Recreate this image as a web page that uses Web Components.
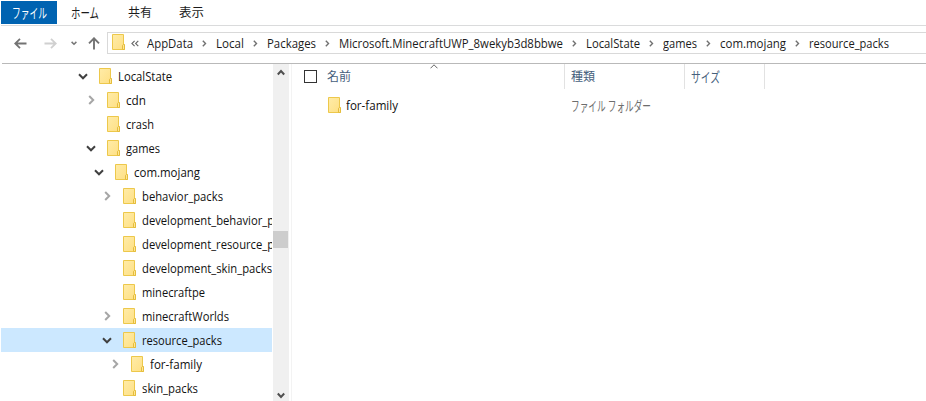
<!DOCTYPE html>
<html lang="ja"><head><meta charset="utf-8"><title>resource_packs</title>
<style>html,body{margin:0;background:#fff;overflow:hidden}body{font:12px "Open Sans","Noto Sans CJK JP",sans-serif;color:#1b1b1b}</style></head>
<body><file-explorer></file-explorer>
<script>
const define=(name,html,setup)=>customElements.define(name,class extends HTMLElement{
  connectedCallback(){
    if(this.shadowRoot)return;
    const t=document.createElement('template');
    t.innerHTML=typeof html==='function'?html(this):html;
    this.attachShadow({mode:'open'}).append(t.content.cloneNode(true));
    if(setup)setup(this);
  }
});

// A label whose glyphs are condensed or widened to the given advance width.
define('ui-label',e=>`<style>:host{display:block;flex:none;width:${e.getAttribute('w')}px;height:16px;line-height:16px;white-space:nowrap}span{display:inline-block;transform-origin:0 50%;line-height:16px;height:16px;vertical-align:top}</style><span>${e.getAttribute('text')}</span>`,e=>{
  const s=e.shadowRoot.querySelector('span');
  const kana=/[ァ-ヶ]/.test(e.getAttribute('text'));
  s.style.transform=`scale(${e.getAttribute('w')/s.getBoundingClientRect().width},${kana?1.14:1})`;
});

define('folder-icon',`<style>:host{display:block;flex:none;width:13px;height:16px}svg{display:block}</style>
<svg width="13" height="16" viewBox="0 0 13 16"><defs><linearGradient id="g" x2="1" y2="1"><stop stop-color="#ffeca8"/><stop offset="1" stop-color="#fedf83"/></linearGradient></defs><path d="M.5.5h11v10.5h1v4.5H.5z" fill="url(#g)" stroke="#edc84b"/><path d="M10.5 15.5v-4.2l1-.8h1v5z" fill="#ffe695" stroke="#e5bd3c"/></svg>`);

const shapes={
  right:[7,10,'M1.2 1l4 4-4 4','#a6a6a6',2],
  down:[10,7,'M1 1.3l4 4 4-4','#404040',2],
  crumb:[5,7,'M.8.8l2.7 2.7L.8 6.2','#707070',1.4],
  double:[8,7,'M3.6.8L.9 3.5l2.7 2.7M7.3.8L4.6 3.5l2.7 2.7','#666',1.1],
  recent:[6,5,'M.6.9L3 3.3 5.4.9','#777',1.5],
  back:[13,11,'M12.5 5.5H1.2M6 .8L1.2 5.5 6 10.2','#737373',1.8],
  forward:[13,11,'M.5 5.5h11.3M7 .8l4.8 4.7L7 10.2','#d0d0d0',1.8],
  up:[12,13,'M6 12.5V1.5M1 6.3l5-5 5 5','#737373',1.9],
  sort:[8,5,'M.5 4.3L4 .8l3.5 3.5','#666',1],
  sup:[8,7,'M.8 5.5L4 2l3.2 3.5','#505050',2],
  sdown:[8,7,'M.8 1.5L4 5l3.2-3.5','#505050',2]
};
define('line-icon',e=>{const[w,h,d,c,s]=shapes[e.getAttribute('name')];return `<style>:host{display:block;flex:none;width:${w}px;height:${h}px}svg{display:block}</style><svg width="${w}" height="${h}" viewBox="0 0 ${w} ${h}"><path d="${d}" fill="none" stroke="${c}" stroke-width="${s}"/></svg>`});

define('ribbon-tabs',`<style>:host{display:flex;height:25px;border-bottom:1px solid #dadbdc;margin-left:1px;align-items:flex-start}
div{height:24px;display:flex;align-items:center;padding:2px 0 0 11px;box-sizing:border-box}.on{background:linear-gradient(#fff 1px,#0063b1 1px);color:#fff;width:56px}.home{width:59px;padding-left:14px}.share{width:52px;padding-left:12px}</style>
<div class="on"><ui-label text="ファイル" w="35"></ui-label></div><div class="home"><ui-label text="ホーム" w="28"></ui-label></div><div class="share"><ui-label text="共有" w="24"></ui-label></div><div><ui-label text="表示" w="25"></ui-label></div>`);

const crumbs=[['AppData',46],['Local',28],['Packages',49],['Microsoft.MinecraftUWP_8wekyb3d8bbwe',224],['LocalState',54],['games',34],['com.mojang',66],['resource_packs',80]];
define('address-bar',`<style>:host{display:flex;height:37px;box-sizing:border-box;padding:6px 0 0 14px}
nav{width:93px;display:flex;height:22px;align-items:center}.f{margin-left:17px}.r{margin-left:14px}.u{margin-left:11px}
section{flex:1;height:22px;box-sizing:border-box;border:1px solid #d9d9d9;border-right:0;display:flex;align-items:center;padding-left:4px}
.d{margin:1px 8px 0 6px}.c{margin:1px 9px 0 9px}ui-label{margin-top:1px}folder-icon{margin-top:-2px}</style>
<nav><line-icon name="back"></line-icon><line-icon class="f" name="forward"></line-icon><line-icon class="r" name="recent"></line-icon><line-icon class="u" name="up"></line-icon></nav>
<section><folder-icon></folder-icon><line-icon class="d" name="double"></line-icon>${crumbs.map(([t,w])=>`<ui-label text="${t}" w="${w}"></ui-label>`).join('<line-icon class="c" name="crumb"></line-icon>')}</section>`);

define('tree-row',e=>`<style>:host{display:flex;height:24px;align-items:center;box-sizing:border-box;margin-left:1px;padding-left:${+e.getAttribute('x')-22}px;overflow:hidden;color:#111}:host([selected]){background:#cce8ff}
i{display:flex;width:21px;flex:none;box-sizing:border-box}i.right{padding-left:2px}ui-label{margin:1px 0 0 6px}</style>
<i class="${e.getAttribute('state')||''}">${e.hasAttribute('state')?`<line-icon name="${e.getAttribute('state')}"></line-icon>`:''}</i><folder-icon></folder-icon><ui-label text="${e.getAttribute('text')}" w="${e.getAttribute('w')}"></ui-label>`);

const tree=[['LocalState',54,99,'down'],['cdn',20,107,'right'],['crash',28,107],['games',34,107,'down'],['com.mojang',66,115,'down'],['behavior_packs',81,123,'right'],['development_behavior_packs',155,123],['development_resource_packs',155,123],['development_skin_packs',130,123],['minecraftpe',63,123],['minecraftWorlds',87,123,'right'],['resource_packs',80,123,'down',1],['for-family',52,131,'right'],['skin_packs',56,123]];
define('folder-tree',`<style>:host{display:block;width:272px;flex:none;overflow:hidden}</style>${tree.map(([t,w,x,s,sel])=>`<tree-row text="${t}" w="${w}" x="${x}" ${s?`state="${s}"`:''} ${sel?'selected':''}></tree-row>`).join('')}`);

define('scroll-bar',`<style>:host{display:flex;flex-direction:column;align-items:center;width:16px;flex:none;margin-left:1px;box-sizing:border-box;background:#f0f0f0;padding-top:5px}
b{width:15px;height:17px;background:#cdcdcd;align-self:flex-start;margin-top:155px}.end{margin-top:144px}.up,.end{margin-right:1px}</style>
<line-icon class="up" name="sup"></line-icon><b></b><line-icon class="end" name="sdown"></line-icon>`);

define('file-list',`<style>:host{display:block;flex:1;margin-left:2px;border-left:1px solid #f3f3f3}
header{height:25px;display:flex;color:#46607c}header div{box-sizing:border-box;border-right:1px solid #e2e2e2;display:flex;align-items:center;padding-left:6px}
.name{width:273px;padding-left:12px!important;position:relative}.name em{width:11px;height:11px;border:1px solid #333;flex:none;margin-right:10px}.name line-icon{position:absolute;left:138px;top:0}
.kind{width:120px}.size{width:80px}
.file{display:flex;align-items:center;height:24px;padding:4px 0 0 36px}.file ui-label{margin:2px 0 0 5px;color:#111}.file .type{color:#6d6d6d;margin-left:173px}</style>
<header><div class="name"><em></em><ui-label text="名前" w="24"></ui-label><line-icon name="sort"></line-icon></div><div class="kind"><ui-label text="種類" w="24"></ui-label></div><div class="size"><ui-label text="サイズ" w="29"></ui-label></div></header>
<div class="file"><folder-icon></folder-icon><ui-label text="for-family" w="52"></ui-label><ui-label class="type" text="ファイル フォルダー" w="80"></ui-label></div>`);

define('file-explorer',`<style>:host{display:flex;flex-direction:column;width:926px;height:401px;overflow:hidden;background:#fff}main{display:flex;flex:1;min-height:0}hr{border:0;height:1px;margin:0 0 0 2px;background:#b9b9b9;flex:none}</style>
<ribbon-tabs></ribbon-tabs><address-bar></address-bar><hr><main><folder-tree></folder-tree><scroll-bar></scroll-bar><file-list></file-list></main>`);
</script></body></html>
